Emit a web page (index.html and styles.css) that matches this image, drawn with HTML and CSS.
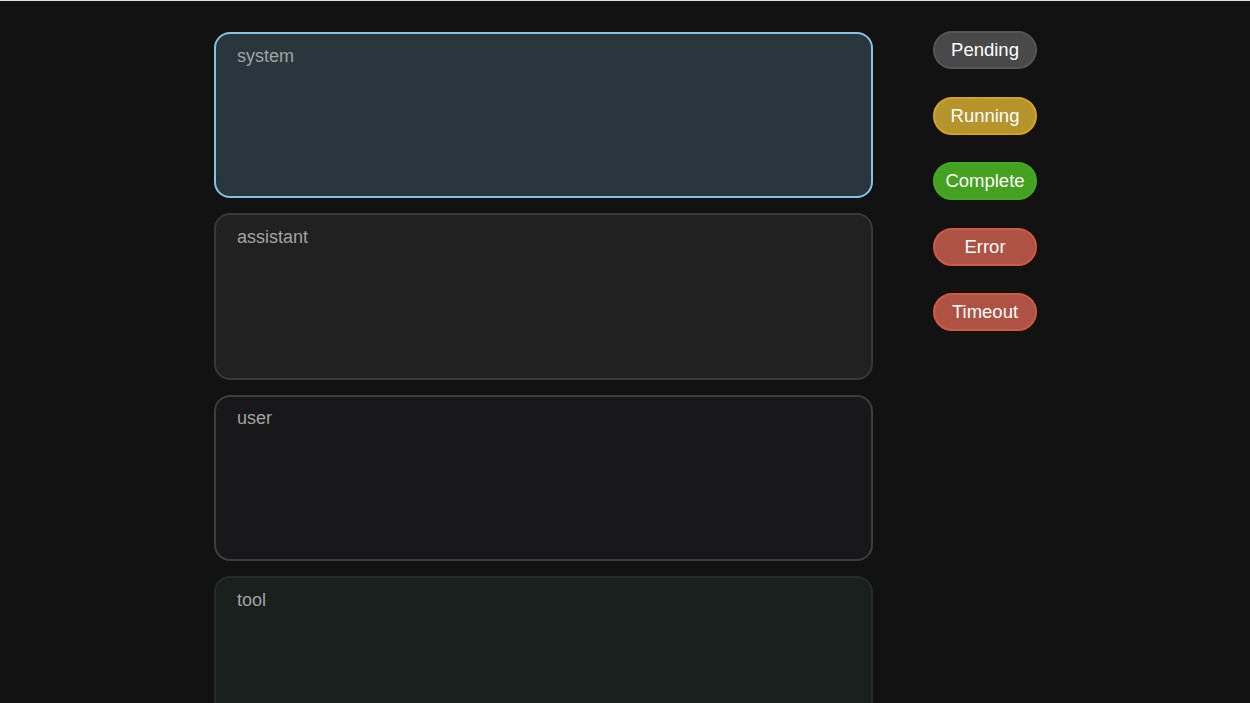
FILE: index.html
```html
<!DOCTYPE html>
<html lang="en">
<head>
  <meta charset="UTF-8">
  <meta name="viewport" content="width=device-width, initial-scale=1.0">
  <title>Messages</title>
  <link rel="stylesheet" href="styles.css">
</head>
<body>
  <div class="wrapper">
    <div class="messages">
      <div class="message system"><span class="role">system</span></div>
      <div class="message assistant"><span class="role">assistant</span></div>
      <div class="message user"><span class="role">user</span></div>
      <div class="message tool"><span class="role">tool</span></div>
    </div>
    <div class="statuses">
      <span class="status pending">Pending</span>
      <span class="status running">Running</span>
      <span class="status complete">Complete</span>
      <span class="status error">Error</span>
      <span class="status timeout">Timeout</span>
    </div>
  </div>
</body>
</html>
```

FILE: styles.css
```css
* {
  margin: 0;
  padding: 0;
  box-sizing: border-box;
  font-family: "Liberation Sans", Arial, sans-serif;
}

body {
  width: 100%;
  height: 100vh;
  overflow: hidden;
  background: #121212;
  border-top: 1px solid #e2dfd8;
}

.wrapper {
  display: flex;
  justify-content: center;
  align-items: flex-start;
  gap: 60px;
  padding: 30px 0 0 1px;
}

.messages {
  width: 659px;
  display: flex;
  flex-direction: column;
  gap: 15.2px;
  padding-top: 1px;
}

.message {
  height: 166.2px;
  border: 2px solid #3a3a3a;
  border-radius: 16px;
  padding: 11.5px 21px;
}

.message .role {
  font-size: 18px;
  color: #a3a3a3;
}

.message.system {
  background: #29373d;
  border-color: #80c6e4;
}

.message.assistant {
  background: #212121;
  border-color: #393939;
}

.message.user {
  background: #18181a;
  border-color: #3d3e40;
}

.message.tool {
  background: #1a201e;
  border-color: #232c29;
}

.statuses {
  display: flex;
  flex-direction: column;
  gap: 27.5px;
}

.status {
  width: 104px;
  height: 38px;
  display: flex;
  align-items: center;
  justify-content: center;
  border: 2px solid #5a5a5a;
  border-radius: 20px;
  font-size: 18.5px;
  color: #fff;
}

.status.pending {
  background: #494949;
  border-color: #555;
}

.status.running {
  background: #b5942b;
  border-color: #d2a51e;
}

.status.complete {
  background: #44a220;
  border-color: #47a624;
}

.status.error,
.status.timeout {
  background: #ae5243;
  border-color: #d05a45;
}
```
